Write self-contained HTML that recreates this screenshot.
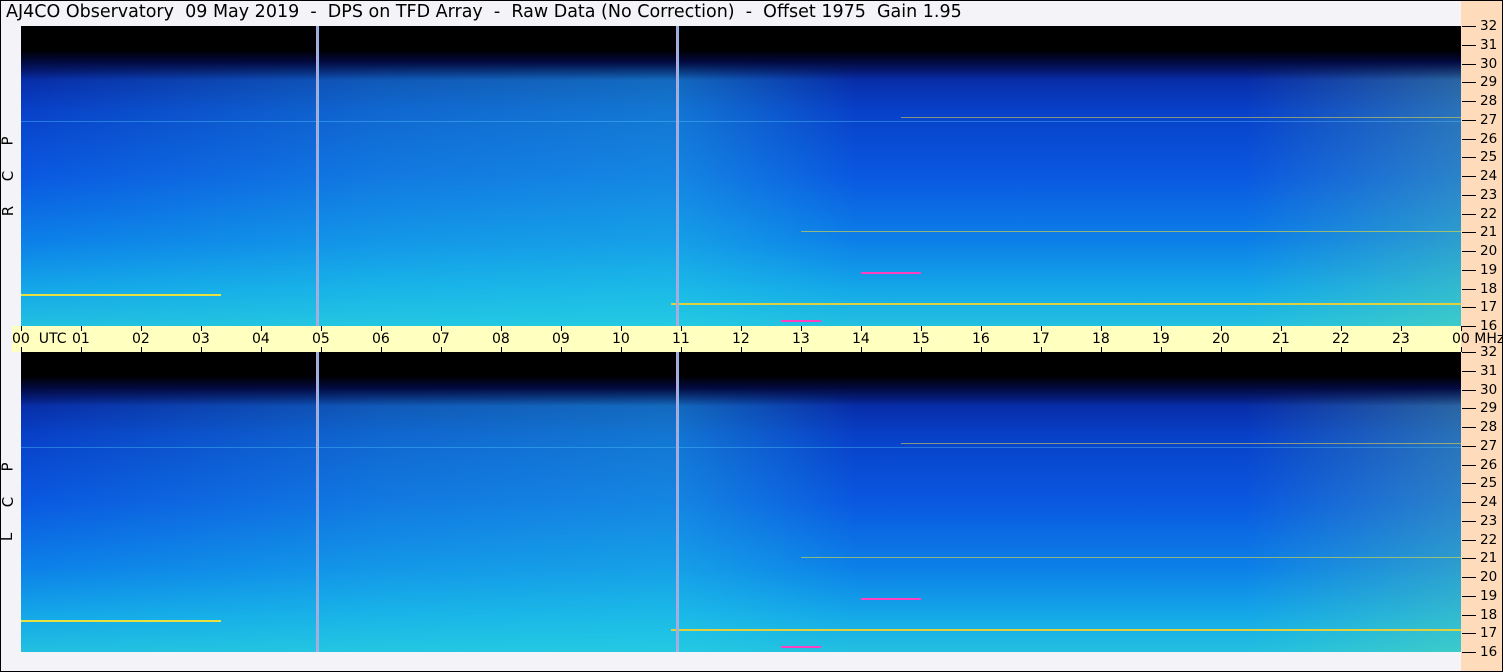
<!DOCTYPE html>
<html><head><style>
body{margin:0;width:1503px;height:672px;background:#f4f4f8;position:relative;overflow:hidden;font-family:"DejaVu Sans",sans-serif;}
.t{position:absolute;left:6px;top:2px;font-size:17.5px;color:#000;white-space:pre;}
.frame{position:absolute;left:0;top:0;width:1501px;height:670px;border:1px solid #000;pointer-events:none}
.right{position:absolute;left:1461px;top:0;width:42px;height:672px;background:#fedcbb;}
.sp{position:absolute;left:21px;width:1440px;height:300px;overflow:hidden;
background:
linear-gradient(to bottom,#000 0,#000 8%,#020a40 12%,rgba(0,0,0,0) 18%),
linear-gradient(to right,rgba(0,0,0,0) 0,rgba(40,220,230,.25) 25%,rgba(40,220,230,.35) 45%,rgba(0,0,0,0) 58%,rgba(0,0,0,0) 85%,rgba(120,230,150,.3) 100%),
linear-gradient(to bottom,#0828a0 15%,#0840c8 28%,#0a58e0 50%,#0c80e8 72%,#14a8e8 88%,#22c0e0 100%);}
.ln{position:absolute;height:2px}
.v{position:absolute;top:0;width:3px;height:300px;background:linear-gradient(to right,#40e0ff,#ff80c0,#40e0ff)}
.band{position:absolute;left:12px;top:326px;width:1449px;height:26px;background:#ffffc0;}
.hl{position:absolute;top:331px;font-size:14px;white-space:nowrap}
.tk{position:absolute;width:1px;background:#000}
.fl{position:absolute;left:1480px;font-size:13.5px}
.fk{position:absolute;left:1462px;width:14px;height:1px;background:#000}
.lt{position:absolute;left:3px;font-size:15px;transform:rotate(-90deg)}
</style></head><body>
<div class="t">AJ4CO Observatory  09 May 2019  -  DPS on TFD Array  -  Raw Data (No Correction)  -  Offset 1975  Gain 1.95</div>
<div class="right"></div>
<div class="sp" style="top:26px">
<div class="ln" style="top:95px;left:0;width:1440px;height:1px;background:rgba(80,200,255,.4)"></div>
<div class="ln" style="top:91px;left:880px;width:560px;height:1px;background:rgba(255,230,60,.5)"></div>
<div class="ln" style="top:268px;left:0;width:200px;background:#e8e040"></div>
<div class="ln" style="top:277px;left:650px;width:790px;background:#e0d040"></div>
<div class="ln" style="top:246px;left:840px;width:60px;background:#ff40c0"></div>
<div class="ln" style="top:205px;left:780px;width:660px;height:1px;background:rgba(230,220,60,.6)"></div>
<div class="ln" style="top:294px;left:760px;width:40px;background:#ff40c0"></div>
<div class="v" style="left:295px"></div><div class="v" style="left:655px"></div>
</div>
<div class="sp" style="top:352px">
<div class="ln" style="top:95px;left:0;width:1440px;height:1px;background:rgba(80,200,255,.4)"></div>
<div class="ln" style="top:91px;left:880px;width:560px;height:1px;background:rgba(255,230,60,.5)"></div>
<div class="ln" style="top:268px;left:0;width:200px;background:#e8e040"></div>
<div class="ln" style="top:277px;left:650px;width:790px;background:#e0d040"></div>
<div class="ln" style="top:246px;left:840px;width:60px;background:#ff40c0"></div>
<div class="ln" style="top:205px;left:780px;width:660px;height:1px;background:rgba(230,220,60,.6)"></div>
<div class="ln" style="top:294px;left:760px;width:40px;background:#ff40c0"></div>
<div class="v" style="left:295px"></div><div class="v" style="left:655px"></div>
</div>
<div class="band"></div>
<div id="x"></div>
<div class="lt" style="top:132px">P</div><div class="lt" style="top:167px">C</div><div class="lt" style="top:202px">R</div>
<div class="lt" style="top:458px">P</div><div class="lt" style="top:493px">C</div><div class="lt" style="top:528px">L</div>
<div class="frame"></div>
<script>
var h='';
for(var i=0;i<=24;i++){var x=21+60*i;var s=(i%24<10?'0':'')+(i%24);
h+='<div class="tk" style="left:'+x+'px;top:326px;height:5px"></div><div class="tk" style="left:'+x+'px;top:347px;height:5px"></div>';
h+='<div class="hl" style="left:'+(x-9)+'px">'+s+(i==0?'&nbsp; UTC':'')+(i==24?' MHz':'')+'</div>';}
for(var p=0;p<2;p++)for(var f=32;f>=16;f--){var y=26+p*326+(32-f)*18.75;
h+='<div class="fk" style="top:'+Math.round(y)+'px"></div><div class="fl" style="top:'+Math.round(y-8)+'px">'+f+'</div>';}
document.getElementById('x').innerHTML=h;
</script>
</body></html>
